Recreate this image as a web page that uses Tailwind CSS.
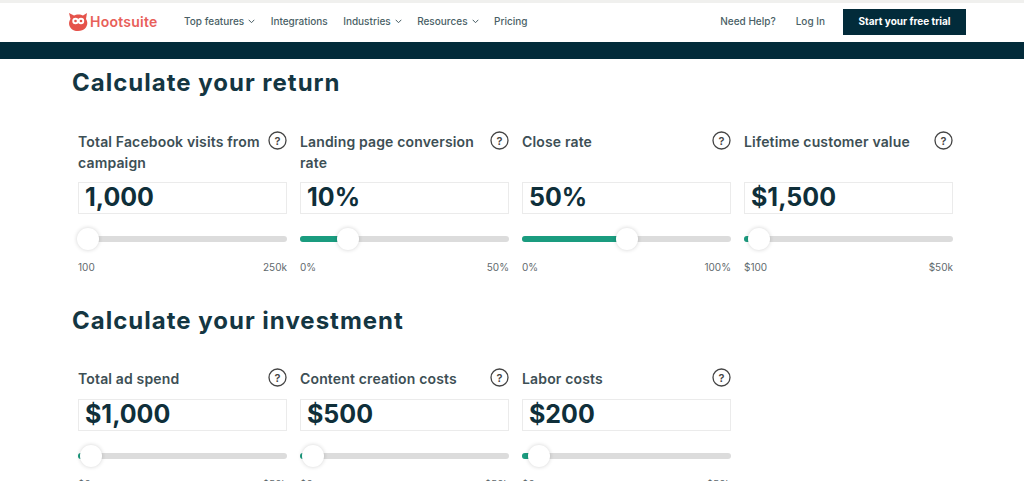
<!doctype html>
<html>

<head>
  <meta charset="UTF-8">
  <meta name="viewport" content="width=device-width, initial-scale=1.0">
  <script src="https://cdn.jsdelivr.net/npm/@tailwindcss/browser@4"></script>
</head>

<body class="bg-white text-[#143642] font-['Inter','Liberation_Sans',sans-serif] overflow-hidden">
  <div class="h-[481px] overflow-hidden">
    <div class="h-[3px] bg-[#f0f0ee]"></div>

    <!-- nav -->
    <header class="h-[39px] flex items-center pb-[2px] pl-[68px] pr-[58px] text-[10px] font-medium text-[#4a5f66]">
      <a class="flex items-center gap-[1px] w-[116px] text-[#e8605a] text-[14px] font-semibold tracking-[0.25px]">
        <svg width="21" height="20" viewBox="0 0 21 20">
          <path d="M1 1 L6 3.5 C8 2 13 2 15 3.5 L19 1 L18 7 C21 11 19 19 10 19 C2 19 -1 12 2.5 7 Z" fill="#e5534b" />
          <circle cx="7.5" cy="9" r="3.2" fill="#fff" />
          <circle cx="13" cy="9" r="3.2" fill="#fff" />
          <circle cx="7.5" cy="9" r="1.3" fill="#e5534b" />
          <circle cx="13" cy="9" r="1.3" fill="#e5534b" />
        </svg>
        Hootsuite
      </a>
      <nav class="flex items-center gap-[15.5px]">
        <a class="flex items-center gap-[4px]">Top features
          <svg width="7" height="5" viewBox="0 0 7 5" fill="none" stroke="#4a5f66"><path d="M.7.8 3.5 3.7 6.3.8" /></svg>
        </a>
        <a>Integrations</a>
        <a class="flex items-center gap-[4px]">Industries
          <svg width="7" height="5" viewBox="0 0 7 5" fill="none" stroke="#4a5f66"><path d="M.7.8 3.5 3.7 6.3.8" /></svg>
        </a>
        <a class="flex items-center gap-[4px]">Resources
          <svg width="7" height="5" viewBox="0 0 7 5" fill="none" stroke="#4a5f66"><path d="M.7.8 3.5 3.7 6.3.8" /></svg>
        </a>
        <a>Pricing</a>
      </nav>
      <div class="ml-auto flex items-center gap-[20px]">
        <a>Need Help?</a>
        <a class="mr-[-2px]">Log In</a>
        <a class="h-[26px] w-[123px] bg-[#022b3a] text-white font-bold flex items-center justify-center">Start your free trial</a>
      </div>
    </header>
    <div class="h-[17px] bg-[#022b3a]"></div>

    <main class="pl-[72px]">
      <!-- return -->
      <h2 class="text-[24px] leading-[30px] font-bold tracking-[1px] text-[#143642] mt-[9px]">Calculate your return</h2>
      <div class="grid grid-cols-[209px_209px_209px_209px] gap-x-[13px] pl-[6px] mt-[33px]">

        <div>
          <div class="h-[41px] flex justify-between items-start">
            <p class="w-[185px] text-[14px] leading-[21px] tracking-[0.15px] font-semibold text-[#3d4f55]">Total Facebook visits from campaign</p>
            <svg class="shrink-0" width="19" height="19" viewBox="0 0 19 19"><circle cx="9.5" cy="9.5" r="8.5" fill="none" stroke="#444" stroke-width="1.3" /><text x="9.5" y="13.5" text-anchor="middle" font-size="11" font-weight="600" fill="#444">?</text></svg>
          </div>
          <div class="mt-[10px] h-[32px] border border-[#ebebeb] px-[6px] flex items-center text-[25px] font-bold text-[#0f2f3a]">1,000</div>
          <div class="relative mt-[22px] h-[6px] rounded-full bg-[#dcdcdc]">
            <div class="absolute left-0 top-0 h-[6px] w-[3px] bg-[#1a9c7f] rounded-l-full"></div>
            <div class="absolute left-[-1px] top-[-8px] size-[22px] rounded-full bg-white shadow-[0_0_4px_rgba(0,0,0,0.18)]"></div>
          </div>
          <div class="mt-[18px] flex justify-between text-[10px] leading-[14px] text-[#5f6a6e]"><span>100</span><span>250k</span></div>
        </div>

        <div>
          <div class="h-[41px] flex justify-between items-start">
            <p class="w-[185px] text-[14px] leading-[21px] tracking-[0.15px] font-semibold text-[#3d4f55]">Landing page conversion rate</p>
            <svg class="shrink-0" width="19" height="19" viewBox="0 0 19 19"><circle cx="9.5" cy="9.5" r="8.5" fill="none" stroke="#444" stroke-width="1.3" /><text x="9.5" y="13.5" text-anchor="middle" font-size="11" font-weight="600" fill="#444">?</text></svg>
          </div>
          <div class="mt-[10px] h-[32px] border border-[#ebebeb] px-[6px] flex items-center text-[25px] font-bold text-[#0f2f3a]">10%</div>
          <div class="relative mt-[22px] h-[6px] rounded-full bg-[#dcdcdc]">
            <div class="absolute left-0 top-0 h-[6px] w-[40px] bg-[#1a9c7f] rounded-l-full"></div>
            <div class="absolute left-[37px] top-[-8px] size-[22px] rounded-full bg-white shadow-[0_0_4px_rgba(0,0,0,0.18)]"></div>
          </div>
          <div class="mt-[18px] flex justify-between text-[10px] leading-[14px] text-[#5f6a6e]"><span>0%</span><span>50%</span></div>
        </div>

        <div>
          <div class="h-[41px] flex justify-between items-start">
            <p class="w-[185px] text-[14px] leading-[21px] tracking-[0.15px] font-semibold text-[#3d4f55]">Close rate</p>
            <svg class="shrink-0" width="19" height="19" viewBox="0 0 19 19"><circle cx="9.5" cy="9.5" r="8.5" fill="none" stroke="#444" stroke-width="1.3" /><text x="9.5" y="13.5" text-anchor="middle" font-size="11" font-weight="600" fill="#444">?</text></svg>
          </div>
          <div class="mt-[10px] h-[32px] border border-[#ebebeb] px-[6px] flex items-center text-[25px] font-bold text-[#0f2f3a]">50%</div>
          <div class="relative mt-[22px] h-[6px] rounded-full bg-[#dcdcdc]">
            <div class="absolute left-0 top-0 h-[6px] w-[97px] bg-[#1a9c7f] rounded-l-full"></div>
            <div class="absolute left-[94px] top-[-8px] size-[22px] rounded-full bg-white shadow-[0_0_4px_rgba(0,0,0,0.18)]"></div>
          </div>
          <div class="mt-[18px] flex justify-between text-[10px] leading-[14px] text-[#5f6a6e]"><span>0%</span><span>100%</span></div>
        </div>

        <div>
          <div class="h-[41px] flex justify-between items-start">
            <p class="w-[185px] text-[14px] leading-[21px] tracking-[0.15px] font-semibold text-[#3d4f55]">Lifetime customer value</p>
            <svg class="shrink-0" width="19" height="19" viewBox="0 0 19 19"><circle cx="9.5" cy="9.5" r="8.5" fill="none" stroke="#444" stroke-width="1.3" /><text x="9.5" y="13.5" text-anchor="middle" font-size="11" font-weight="600" fill="#444">?</text></svg>
          </div>
          <div class="mt-[10px] h-[32px] border border-[#ebebeb] px-[6px] flex items-center text-[25px] font-bold text-[#0f2f3a]">$1,500</div>
          <div class="relative mt-[22px] h-[6px] rounded-full bg-[#dcdcdc]">
            <div class="absolute left-0 top-0 h-[6px] w-[7px] bg-[#1a9c7f] rounded-l-full"></div>
            <div class="absolute left-[4px] top-[-8px] size-[22px] rounded-full bg-white shadow-[0_0_4px_rgba(0,0,0,0.18)]"></div>
          </div>
          <div class="mt-[18px] flex justify-between text-[10px] leading-[14px] text-[#5f6a6e]"><span>$100</span><span>$50k</span></div>
        </div>
      </div>

      <!-- investment -->
      <h2 class="text-[24px] leading-[30px] font-bold tracking-[1px] text-[#143642] mt-[32px]">Calculate your investment</h2>
      <div class="grid grid-cols-[209px_209px_209px] gap-x-[13px] pl-[6px] mt-[32px]">

        <div>
          <div class="h-[21px] flex justify-between items-start">
            <p class="text-[14px] leading-[21px] tracking-[0.15px] font-semibold text-[#3d4f55]">Total ad spend</p>
            <svg class="shrink-0" width="19" height="19" viewBox="0 0 19 19"><circle cx="9.5" cy="9.5" r="8.5" fill="none" stroke="#444" stroke-width="1.3" /><text x="9.5" y="13.5" text-anchor="middle" font-size="11" font-weight="600" fill="#444">?</text></svg>
          </div>
          <div class="mt-[10px] h-[32px] border border-[#ebebeb] px-[6px] flex items-center text-[25px] font-bold text-[#0f2f3a]">$1,000</div>
          <div class="relative mt-[22px] h-[6px] rounded-full bg-[#dcdcdc]">
            <div class="absolute left-0 top-0 h-[6px] w-[6px] bg-[#1a9c7f] rounded-l-full"></div>
            <div class="absolute left-[2px] top-[-8px] size-[22px] rounded-full bg-white shadow-[0_0_4px_rgba(0,0,0,0.18)]"></div>
          </div>
          <div class="mt-[18px] flex justify-between text-[10px] leading-[14px] text-[#5f6a6e]"><span>$0</span><span>$50k</span></div>
        </div>

        <div>
          <div class="h-[21px] flex justify-between items-start">
            <p class="text-[14px] leading-[21px] tracking-[0.15px] font-semibold text-[#3d4f55]">Content creation costs</p>
            <svg class="shrink-0" width="19" height="19" viewBox="0 0 19 19"><circle cx="9.5" cy="9.5" r="8.5" fill="none" stroke="#444" stroke-width="1.3" /><text x="9.5" y="13.5" text-anchor="middle" font-size="11" font-weight="600" fill="#444">?</text></svg>
          </div>
          <div class="mt-[10px] h-[32px] border border-[#ebebeb] px-[6px] flex items-center text-[25px] font-bold text-[#0f2f3a]">$500</div>
          <div class="relative mt-[22px] h-[6px] rounded-full bg-[#dcdcdc]">
            <div class="absolute left-0 top-0 h-[6px] w-[6px] bg-[#1a9c7f] rounded-l-full"></div>
            <div class="absolute left-[2px] top-[-8px] size-[22px] rounded-full bg-white shadow-[0_0_4px_rgba(0,0,0,0.18)]"></div>
          </div>
          <div class="mt-[18px] flex justify-between text-[10px] leading-[14px] text-[#5f6a6e]"><span>$0</span><span>$50k</span></div>
        </div>

        <div>
          <div class="h-[21px] flex justify-between items-start">
            <p class="text-[14px] leading-[21px] tracking-[0.15px] font-semibold text-[#3d4f55]">Labor costs</p>
            <svg class="shrink-0" width="19" height="19" viewBox="0 0 19 19"><circle cx="9.5" cy="9.5" r="8.5" fill="none" stroke="#444" stroke-width="1.3" /><text x="9.5" y="13.5" text-anchor="middle" font-size="11" font-weight="600" fill="#444">?</text></svg>
          </div>
          <div class="mt-[10px] h-[32px] border border-[#ebebeb] px-[6px] flex items-center text-[25px] font-bold text-[#0f2f3a]">$200</div>
          <div class="relative mt-[22px] h-[6px] rounded-full bg-[#dcdcdc]">
            <div class="absolute left-0 top-0 h-[6px] w-[9px] bg-[#1a9c7f] rounded-l-full"></div>
            <div class="absolute left-[6px] top-[-8px] size-[22px] rounded-full bg-white shadow-[0_0_4px_rgba(0,0,0,0.18)]"></div>
          </div>
          <div class="mt-[18px] flex justify-between text-[10px] leading-[14px] text-[#5f6a6e]"><span>$0</span><span>$50k</span></div>
        </div>
      </div>
    </main>
  </div>
</body>

</html>
